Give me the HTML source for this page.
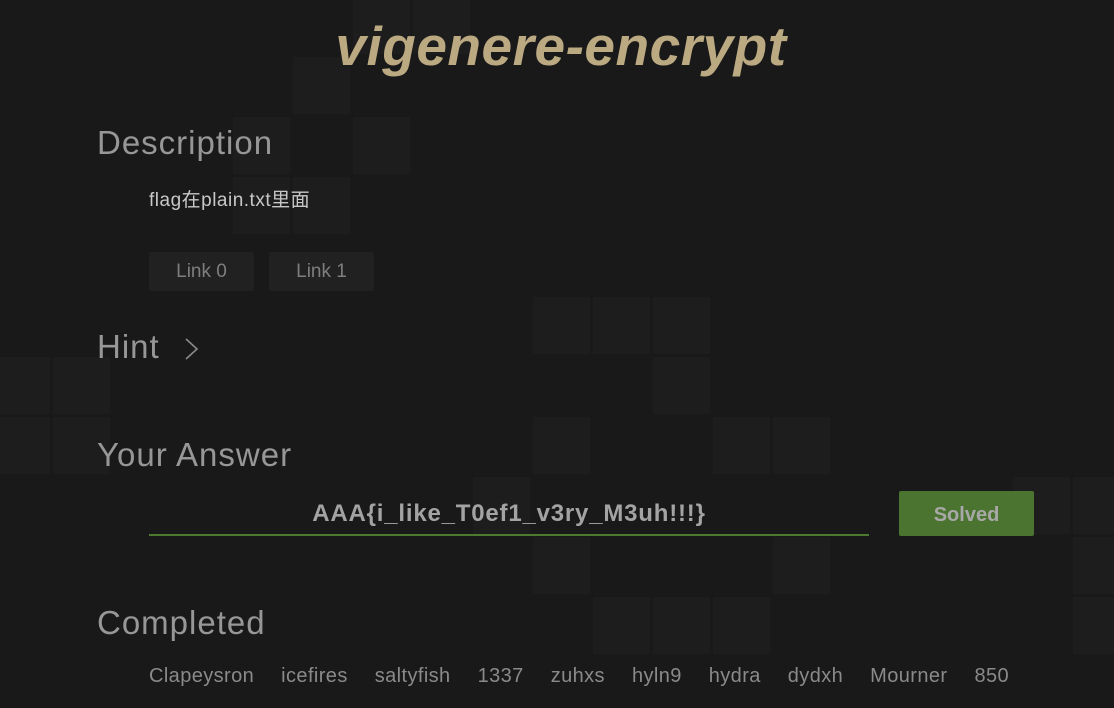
<!DOCTYPE html>
<html><head><meta charset="utf-8"><style>
html,body{margin:0;padding:0;width:1114px;height:708px;overflow:hidden;background:#191919;font-family:"Liberation Sans","Noto Sans CJK SC",sans-serif;}
.sq{position:absolute;width:57px;height:57px;background:#1d1d1d;}
.t{position:absolute;white-space:nowrap;}
h2{position:absolute;margin:0;font-weight:normal;font-size:33px;color:#979797;left:97px;letter-spacing:1px;}
.btn{position:absolute;top:252px;height:39px;background:#212121;border-radius:2px;color:#7e7e7e;font-size:19px;line-height:39px;text-align:center;}
.n{margin-left:27px}
</style></head><body>
<div class="sq" style="left:353px;top:-3px"></div>
<div class="sq" style="left:413px;top:-3px"></div>
<div class="sq" style="left:293px;top:57px"></div>
<div class="sq" style="left:233px;top:117px"></div>
<div class="sq" style="left:353px;top:117px"></div>
<div class="sq" style="left:233px;top:177px"></div>
<div class="sq" style="left:293px;top:177px"></div>
<div class="sq" style="left:533px;top:297px"></div>
<div class="sq" style="left:593px;top:297px"></div>
<div class="sq" style="left:653px;top:297px"></div>
<div class="sq" style="left:-7px;top:357px"></div>
<div class="sq" style="left:53px;top:357px"></div>
<div class="sq" style="left:653px;top:357px"></div>
<div class="sq" style="left:-7px;top:417px"></div>
<div class="sq" style="left:53px;top:417px"></div>
<div class="sq" style="left:533px;top:417px"></div>
<div class="sq" style="left:713px;top:417px"></div>
<div class="sq" style="left:773px;top:417px"></div>
<div class="sq" style="left:473px;top:477px"></div>
<div class="sq" style="left:1013px;top:477px"></div>
<div class="sq" style="left:1073px;top:477px"></div>
<div class="sq" style="left:533px;top:537px"></div>
<div class="sq" style="left:773px;top:537px"></div>
<div class="sq" style="left:1073px;top:537px"></div>
<div class="sq" style="left:593px;top:597px"></div>
<div class="sq" style="left:653px;top:597px"></div>
<div class="sq" style="left:713px;top:597px"></div>
<div class="sq" style="left:1073px;top:597px"></div>

<div class="t" style="left:0;width:1122px;text-align:center;top:14px;font-size:55px;font-weight:bold;font-style:italic;color:#bba982;letter-spacing:0.5px;">vigenere-encrypt</div>

<h2 style="top:124px">Description</h2>
<div class="t" style="left:149px;top:185px;font-size:19px;color:#c8c8c8;letter-spacing:0.5px;">flag在plain.txt里面</div>
<div class="btn" style="left:149px;width:105px;">Link 0</div>
<div class="btn" style="left:269px;width:105px;">Link 1</div>

<h2 style="top:328px">Hint</h2>
<svg style="position:absolute;left:183px;top:337px" width="18" height="24" viewBox="0 0 18 24"><path d="M3 2 L14 12 L3 22" fill="none" stroke="#8a8a8a" stroke-width="1.6"/></svg>

<h2 style="top:436px">Your Answer</h2>
<div class="t" style="left:149px;width:720px;text-align:center;top:500px;font-size:24px;font-weight:bold;color:#a3a3a3;letter-spacing:0.8px;">AAA{i_like_T0ef1_v3ry_M3uh!!!}</div>
<div style="position:absolute;left:149px;top:534px;width:720px;height:2px;background:#4e7a30;"></div>
<div style="position:absolute;left:899px;top:491px;width:135px;height:45px;background:#4b7430;border-radius:2px;color:#a8a8a8;font-weight:bold;font-size:20px;line-height:49px;text-align:center;">Solved</div>

<h2 style="top:604px">Completed</h2>
<div class="t" style="left:149px;top:665px;font-size:20px;color:#8a8a8a;letter-spacing:0.4px;">
<span>Clapeysron</span><span class="n">icefires</span><span class="n">saltyfish</span><span class="n">1337</span><span class="n">zuhxs</span><span class="n">hyln9</span><span class="n">hydra</span><span class="n">dydxh</span><span class="n">Mourner</span><span class="n">850</span>
</div>
</body></html>
